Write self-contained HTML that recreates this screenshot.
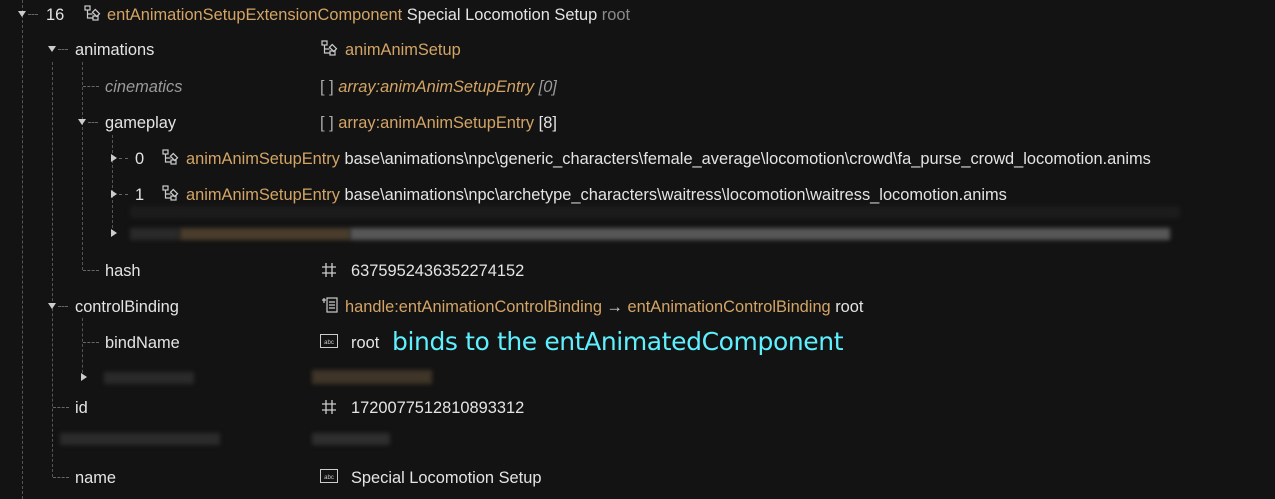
<!DOCTYPE html><html><head><style>
body{margin:0;width:1275px;height:499px;background:#131313;overflow:hidden;font-family:"Liberation Sans",sans-serif;font-size:16.4px;color:#e4e4e4;position:relative}
.a{position:absolute;white-space:nowrap;line-height:20px;margin-top:1px}
.o{color:#d3a465}.g{color:#9a9a9a;font-style:italic}
.v{position:absolute;width:0;border-left:1px dashed #555}
.h{position:absolute;height:0;border-top:1px dashed #666}
.td{position:absolute;width:0;height:0;border-left:4px solid transparent;border-right:4px solid transparent;border-top:6px solid #ccc}
.tr{position:absolute;width:0;height:0;border-top:4px solid transparent;border-bottom:4px solid transparent;border-left:6px solid #ccc}
.b{position:absolute;filter:blur(2px)}
svg{position:absolute}
</style></head><body>
<div class="v" style="left:22px;top:0;height:499px"></div>
<div class="v" style="left:52px;top:62px;height:415px"></div>
<div class="v" style="left:82px;top:62px;height:208px"></div>
<div class="v" style="left:112px;top:135px;height:98px"></div>
<div class="v" style="left:82px;top:318px;height:60px"></div>

<div class="td" style="left:18px;top:11px"></div><div class="h" style="left:28px;top:14px;width:10px"></div>
<div class="a" style="left:46px;top:4px">16</div>
<svg style="left:84px;top:5px" width="18" height="18" viewBox="0 0 18 18" fill="none" stroke="#ccc" stroke-width="1.2"><rect x="1" y="1" width="5" height="4"/><path d="M3.5 5v8h5M3.5 9h5"/><rect x="9" y="6" width="6" height="4" transform="rotate(45 12 8)"/><rect x="9" y="11" width="5" height="4"/></svg>
<div class="a" style="left:107px;top:4px"><span class="o">entAnimationSetupExtensionComponent</span> Special Locomotion Setup <span style="color:#8a8a8a">root</span></div>

<div class="td" style="left:48px;top:46px"></div><div class="h" style="left:58px;top:49px;width:10px"></div>
<div class="a" style="left:75px;top:39px">animations</div>
<svg style="left:321px;top:40px" width="18" height="18" viewBox="0 0 18 18" fill="none" stroke="#ccc" stroke-width="1.2"><rect x="1" y="1" width="5" height="4"/><path d="M3.5 5v8h5M3.5 9h5"/><rect x="9" y="6" width="6" height="4" transform="rotate(45 12 8)"/><rect x="9" y="11" width="5" height="4"/></svg>
<div class="a o" style="left:345px;top:39px">animAnimSetup</div>

<div class="h" style="left:83px;top:86px;width:16px"></div>
<div class="a g" style="left:105px;top:76px">cinematics</div>
<div class="a" style="left:320px;top:76px;color:#aaa">[ ] <span class="o" style="font-style:italic">array:animAnimSetupEntry</span> <span class="g">[0]</span></div>

<div class="td" style="left:78px;top:119px"></div><div class="h" style="left:88px;top:122px;width:10px"></div>
<div class="a" style="left:105px;top:112px">gameplay</div>
<div class="a" style="left:320px;top:112px"><span style="color:#aaa">[ ]</span> <span class="o">array:animAnimSetupEntry</span> [8]</div>

<div class="tr" style="left:111px;top:154px"></div><div class="h" style="left:119px;top:158px;width:9px"></div>
<div class="a" style="left:135px;top:148px">0</div>
<svg style="left:162px;top:149px" width="18" height="18" viewBox="0 0 18 18" fill="none" stroke="#ccc" stroke-width="1.2"><rect x="1" y="1" width="5" height="4"/><path d="M3.5 5v8h5M3.5 9h5"/><rect x="9" y="6" width="6" height="4" transform="rotate(45 12 8)"/><rect x="9" y="11" width="5" height="4"/></svg>
<div class="a" style="left:186px;top:148px"><span class="o">animAnimSetupEntry</span> base\animations\npc\generic_characters\female_average\locomotion\crowd\fa_purse_crowd_locomotion.anims</div>

<div class="tr" style="left:111px;top:190px"></div><div class="h" style="left:119px;top:194px;width:9px"></div>
<div class="a" style="left:135px;top:184px">1</div>
<svg style="left:162px;top:185px" width="18" height="18" viewBox="0 0 18 18" fill="none" stroke="#ccc" stroke-width="1.2"><rect x="1" y="1" width="5" height="4"/><path d="M3.5 5v8h5M3.5 9h5"/><rect x="9" y="6" width="6" height="4" transform="rotate(45 12 8)"/><rect x="9" y="11" width="5" height="4"/></svg>
<div class="a" style="left:186px;top:184px"><span class="o">animAnimSetupEntry</span> base\animations\npc\archetype_characters\waitress\locomotion\waitress_locomotion.anims</div>

<div class="b" style="left:130px;top:206px;width:1050px;height:12px;background:#1c1c1c"></div>
<div class="tr" style="left:111px;top:229px"></div>
<div class="b" style="left:130px;top:228px;width:50px;height:12px;background:#2a2a2a"></div>
<div class="b" style="left:180px;top:228px;width:170px;height:12px;background:#4a3d2c"></div>
<div class="b" style="left:350px;top:228px;width:820px;height:12px;background:#575757"></div>

<div class="h" style="left:83px;top:270px;width:16px"></div>
<div class="a" style="left:105px;top:260px">hash</div>
<svg style="left:321px;top:262px" width="16" height="16" viewBox="0 0 16 16" stroke="#ccc" stroke-width="1.3"><path d="M5 1v14M11 1v14M1 5h14M1 11h14"/></svg>
<div class="a" style="left:351px;top:260px">6375952436352274152</div>

<div class="td" style="left:48px;top:303px"></div><div class="h" style="left:58px;top:306px;width:10px"></div>
<div class="a" style="left:75px;top:296px">controlBinding</div>
<svg style="left:321px;top:296px" width="18" height="18" viewBox="0 0 18 18" fill="none" stroke="#ccc" stroke-width="1.2"><rect x="6" y="2" width="10" height="14"/><path d="M8 6h6M8 9h6M8 12h6M1 4h4M3 2v5"/></svg>
<div class="a" style="left:345px;top:296px"><span class="o">handle:entAnimationControlBinding</span> <span style="color:#ccc">→</span> <span class="o">entAnimationControlBinding</span> root</div>

<div class="h" style="left:83px;top:342px;width:16px"></div>
<div class="a" style="left:105px;top:332px">bindName</div>
<svg style="left:320px;top:334px" width="18" height="15" viewBox="0 0 18 15"><rect x="0.5" y="0.5" width="17" height="13" fill="none" stroke="#ccc"/><text x="9" y="10" font-size="6" fill="#ccc" text-anchor="middle" font-family="Liberation Sans">abc</text></svg>
<div class="a" style="left:351px;top:332px">root</div>
<div class="a" style="left:392px;top:326px;font-size:25px;line-height:30px;color:#5ef0ff;font-family:'DejaVu Sans',sans-serif;letter-spacing:-0.4px">binds to the entAnimatedComponent</div>

<div class="tr" style="left:81px;top:373px"></div>
<div class="b" style="left:104px;top:372px;width:90px;height:12px;background:#2a2a2a"></div>
<div class="b" style="left:312px;top:370px;width:120px;height:14px;background:#3f3528"></div>

<div class="h" style="left:53px;top:407px;width:16px"></div>
<div class="a" style="left:75px;top:397px">id</div>
<svg style="left:321px;top:399px" width="16" height="16" viewBox="0 0 16 16" stroke="#ccc" stroke-width="1.3"><path d="M5 1v14M11 1v14M1 5h14M1 11h14"/></svg>
<div class="a" style="left:351px;top:397px">1720077512810893312</div>

<div class="b" style="left:60px;top:433px;width:160px;height:12px;background:#2b2b2b"></div>
<div class="b" style="left:312px;top:433px;width:78px;height:12px;background:#2e2e2e"></div>

<div class="h" style="left:53px;top:477px;width:16px"></div>
<div class="a" style="left:75px;top:467px">name</div>
<svg style="left:320px;top:469px" width="18" height="15" viewBox="0 0 18 15"><rect x="0.5" y="0.5" width="17" height="13" fill="none" stroke="#ccc"/><text x="9" y="10" font-size="6" fill="#ccc" text-anchor="middle" font-family="Liberation Sans">abc</text></svg>
<div class="a" style="left:351px;top:467px">Special Locomotion Setup</div>
</body></html>
